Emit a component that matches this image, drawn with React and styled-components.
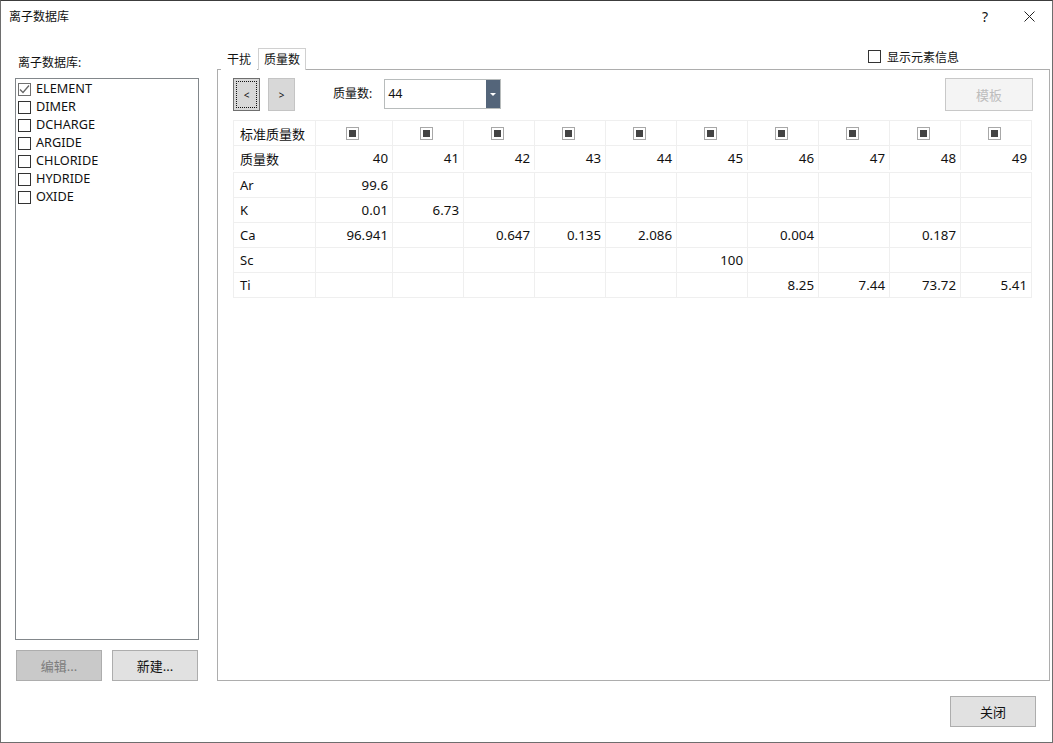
import React from 'react';
import styled, { createGlobalStyle } from 'styled-components';

const GlobalStyle = createGlobalStyle`
    html, body {
        margin: 0;
        padding: 0;
        background: #fff;
    }
    body {
        font-family: "Noto Sans", "Noto Sans CJK SC", sans-serif;
        font-size: 12px;
        color: #111;
    }
    * {
        box-sizing: border-box;
    }
`;

const Dialog = styled.div`
    width: 1053px;
    height: 743px;
    border: 1px solid #6e6e6e;
    border-top-color: #3c3c3c;
    background: #fff;
    display: flex;
    flex-direction: column;
    overflow: hidden;
`;

const TitleBar = styled.div`
    height: 32px;
    flex: none;
    display: flex;
    align-items: center;
    padding: 0 17px 2px 8px;
`;

const TitleText = styled.span`
    flex: 1;
`;

const HelpMark = styled.span`
    font-size: 14px;
    margin-right: 36px;
`;

const Body = styled.div`
    flex: 1;
    min-height: 0;
    display: flex;
    padding: 15px 2px 0 14px;
`;

const LeftColumn = styled.div`
    width: 184px;
    flex: none;
    display: flex;
    flex-direction: column;
`;

const ListLabel = styled.div`
    height: 16px;
    line-height: 16px;
    margin: 7px 0 7px 3px;
`;

const ListBox = styled.div`
    flex: 1;
    border: 1px solid #82878b;
    padding: 1px 2px;
`;

const ListRow = styled.div`
    height: 18px;
    display: flex;
    align-items: center;
    gap: 5px;
`;

const ListName = styled.span`
    font-size: 12.7px;
    margin-top: -2px;
`;

const CheckBox = styled.span`
    width: 13px;
    height: 13px;
    flex: none;
    border: 1px solid ${(p) => (p.$checked ? '#707070' : '#333')};
    background: #fff;
    display: flex;
    align-items: center;
    justify-content: center;
`;

const ListButtons = styled.div`
    display: flex;
    gap: 10px;
    margin: 10px 0 0 1px;
`;

const PushButton = styled.button`
    width: 86px;
    height: 31px;
    padding: 0;
    font: inherit;
    font-size: 13px;
    color: ${(p) => (p.$disabled ? '#7c7c7c' : '#111')};
    background: ${(p) => (p.$disabled ? '#c9c9c9' : '#e1e1e1')};
    border: 1px solid #adadad;
`;

const RightColumn = styled.div`
    flex: 1;
    min-width: 0;
    margin-left: 18px;
    display: flex;
    flex-direction: column;
`;

const TabStrip = styled.div`
    height: 22px;
    flex: none;
    display: flex;
    margin-bottom: -1px;
    position: relative;
    z-index: 1;
`;

const Tab = styled.div`
    height: 22px;
    line-height: 21px;
    padding: 0 5px;
    margin-left: ${(p) => (p.$active ? '1px' : '4px')};
    background: #fff;
    border: 1px solid ${(p) => (p.$active ? '#d0d0d0' : 'transparent')};
    border-bottom: none;
`;

const InfoToggle = styled.label`
    margin-left: auto;
    margin-right: 91px;
    margin-top: 2px;
    height: 13px;
    display: flex;
    align-items: center;
    gap: 6px;
`;

const TabPane = styled.div`
    flex: 1;
    border: 1px solid #adadad;
    padding: 8px 16px 0 15px;
`;

const Toolbar = styled.div`
    height: 33px;
    display: flex;
    align-items: flex-start;
    margin-bottom: 9px;
`;

const StepButton = styled.button`
    width: 27px;
    height: 33px;
    padding: 0;
    margin-right: 8px;
    font: inherit;
    font-size: 10px;
    color: #111;
    background: #d8d8d8;
    border: 1px solid ${(p) => (p.$focused ? '#6f6f6f' : '#c4c4c4')};
    outline: ${(p) => (p.$focused ? '1px dotted #111' : 'none')};
    outline-offset: -4px;
`;

const FieldLabel = styled.span`
    margin-left: 30px;
    line-height: 31px;
`;

const Combo = styled.div`
    width: 117px;
    height: 30px;
    margin: 1px 0 0 12px;
    border: 1px solid #b8bcbc;
    display: flex;
    align-items: stretch;
`;

const ComboValue = styled.span`
    flex: 1;
    font-size: 12.5px;
    line-height: 27px;
    padding-left: 3px;
`;

const ComboArrow = styled.span`
    width: 14px;
    background: #54657a;
    display: flex;
    align-items: center;
    justify-content: center;
    &::after {
        content: '';
        border: 3px solid transparent;
        border-top: 3px solid #fff;
        border-bottom: none;
    }
`;

const TemplateButton = styled.button`
    width: 88px;
    height: 33px;
    margin-left: auto;
    padding: 0;
    font: inherit;
    font-size: 13px;
    color: #bdbdbd;
    background: #f4f4f4;
    border: 1px solid #c8c8c8;
`;

const Grid = styled.div`
    display: grid;
    grid-template-columns: 82px 77px repeat(9, 71px);
    border-left: 1px solid #efefef;
    border-top: 1px solid #efefef;
    width: 799px;
`;

const HeaderGrid = styled(Grid)`
    grid-template-rows: 25px 24px;
    margin-bottom: 2px;
    & > div:nth-last-child(-n + 11) {
        border-bottom: none;
    }
`;

const DataGrid = styled(Grid)`
    grid-auto-rows: 25px;
`;

const Cell = styled.div`
    border-right: 1px solid #efefef;
    border-bottom: 1px solid #efefef;
    display: flex;
    align-items: center;
    justify-content: ${(p) => (p.$center ? 'center' : p.$head ? 'flex-start' : 'flex-end')};
    padding: ${(p) => (p.$head ? '0 0 0 6px' : '0 4px 0 0')};
    font-size: ${(p) => (p.$head ? '13px' : '13.3px')};
    white-space: nowrap;
`;

const MixedBox = styled.span`
    width: 13px;
    height: 13px;
    border: 1px solid #a8a8a8;
    padding: 2px;
    &::after {
        content: '';
        display: block;
        width: 7px;
        height: 7px;
        background: #444;
    }
`;

const Footer = styled.div`
    height: 61px;
    flex: none;
    display: flex;
    justify-content: flex-end;
    padding: 15px 16px 0 0;
`;

const libraries = ['ELEMENT', 'DIMER', 'DCHARGE', 'ARGIDE', 'CHLORIDE', 'HYDRIDE', 'OXIDE'];
const masses = [40, 41, 42, 43, 44, 45, 46, 47, 48, 49];
const rows = [
    ['Ar', '99.6', '', '', '', '', '', '', '', '', ''],
    ['K', '0.01', '6.73', '', '', '', '', '', '', '', ''],
    ['Ca', '96.941', '', '0.647', '0.135', '2.086', '', '0.004', '', '0.187', ''],
    ['Sc', '', '', '', '', '', '100', '', '', '', ''],
    ['Ti', '', '', '', '', '', '', '8.25', '7.44', '73.72', '5.41'],
];

function App() {
    return (
        <Dialog>
            <GlobalStyle />
            <TitleBar>
                <TitleText>离子数据库</TitleText>
                <HelpMark>?</HelpMark>
                <svg width="11" height="11" viewBox="0 0 11 11">
                    <path d="M0.5 0.5 L10.5 10.5 M10.5 0.5 L0.5 10.5" stroke="#222" strokeWidth="1" fill="none" />
                </svg>
            </TitleBar>
            <Body>
                <LeftColumn>
                    <ListLabel>离子数据库:</ListLabel>
                    <ListBox>
                        {libraries.map((name, i) => (
                            <ListRow key={name}>
                                <CheckBox $checked={i === 0}>
                                    {i === 0 && (
                                        <svg width="11" height="11" viewBox="0 0 11 11">
                                            <path d="M1 5.5 L4 8.5 L10 1.5" stroke="#666" strokeWidth="1.3" fill="none" />
                                        </svg>
                                    )}
                                </CheckBox>
                                <ListName>{name}</ListName>
                            </ListRow>
                        ))}
                    </ListBox>
                    <ListButtons>
                        <PushButton $disabled>编辑...</PushButton>
                        <PushButton>新建...</PushButton>
                    </ListButtons>
                </LeftColumn>
                <RightColumn>
                    <TabStrip>
                        <Tab>干扰</Tab>
                        <Tab $active>质量数</Tab>
                        <InfoToggle>
                            <CheckBox />
                            显示元素信息
                        </InfoToggle>
                    </TabStrip>
                    <TabPane>
                        <Toolbar>
                            <StepButton $focused>&lt;</StepButton>
                            <StepButton>&gt;</StepButton>
                            <FieldLabel>质量数:</FieldLabel>
                            <Combo>
                                <ComboValue>44</ComboValue>
                                <ComboArrow />
                            </Combo>
                            <TemplateButton>模板</TemplateButton>
                        </Toolbar>
                        <HeaderGrid>
                            <Cell $head>标准质量数</Cell>
                            {masses.map((m) => (
                                <Cell key={m} $center>
                                    <MixedBox />
                                </Cell>
                            ))}
                            <Cell $head>质量数</Cell>
                            {masses.map((m) => (
                                <Cell key={m}>{m}</Cell>
                            ))}
                        </HeaderGrid>
                        <DataGrid>
                            {rows.map((row) =>
                                row.map((value, i) => (
                                    <Cell key={row[0] + i} $head={i === 0}>
                                        {value}
                                    </Cell>
                                ))
                            )}
                        </DataGrid>
                    </TabPane>
                </RightColumn>
            </Body>
            <Footer>
                <PushButton>关闭</PushButton>
            </Footer>
        </Dialog>
    );
}

export default App;
